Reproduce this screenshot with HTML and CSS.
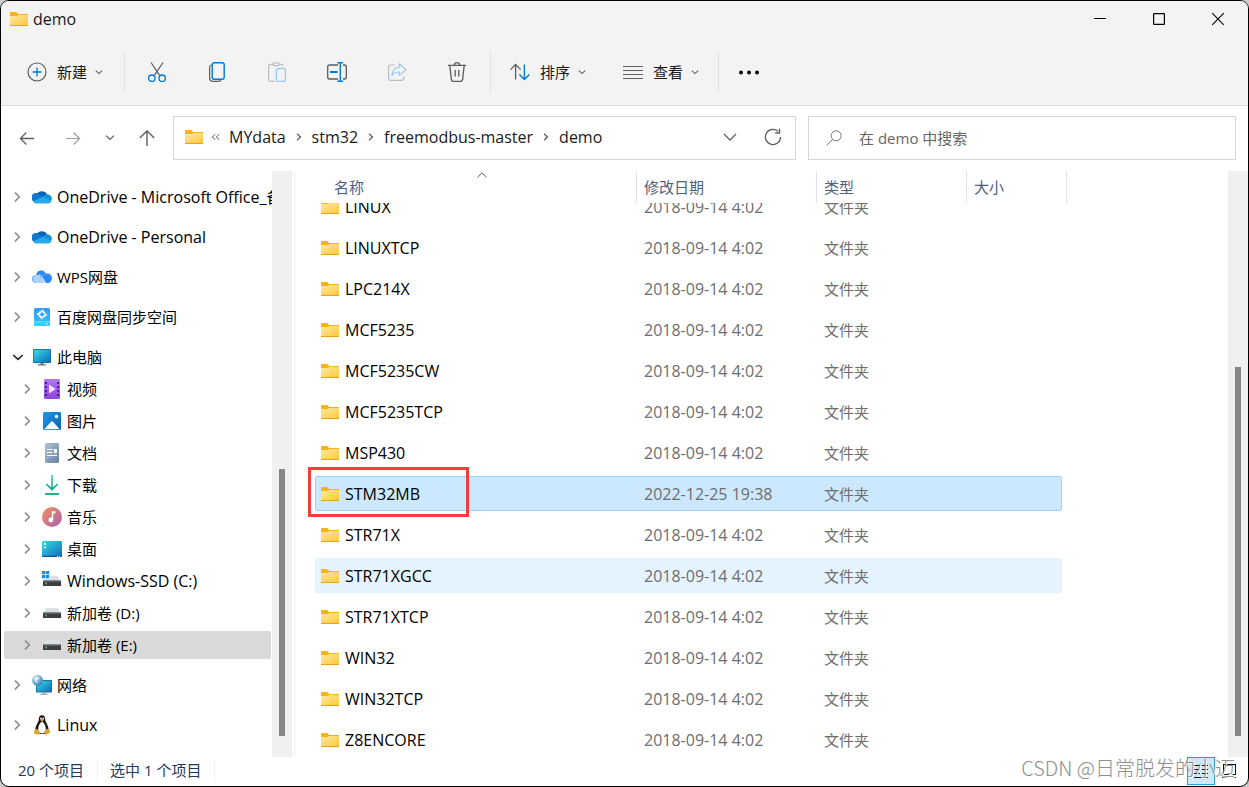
FILE: index.html
```
<!DOCTYPE html>
<html lang="zh-CN">
<head>
<meta charset="utf-8">
<title>demo</title>
<link rel="stylesheet" href="styles.css">
</head>
<body>
<svg class="defs" aria-hidden="true">
  <defs>
    <linearGradient id="gFolder" x1="0" y1="0" x2="1" y2="1"><stop offset="0" stop-color="#ffe9a2"/><stop offset="1" stop-color="#ffc83a"/></linearGradient>
    <linearGradient id="gScreen" x1="0" y1="0" x2="1" y2="1"><stop offset="0" stop-color="#36dbe0"/><stop offset="1" stop-color="#0f6cbd"/></linearGradient>
    <linearGradient id="gVideo" x1="0" y1="0" x2="0" y2="1"><stop offset="0" stop-color="#b377f2"/><stop offset="1" stop-color="#8c44dd"/></linearGradient>
    <linearGradient id="gPic" x1="0" y1="0" x2="1" y2="1"><stop offset="0" stop-color="#1f9be8"/><stop offset="1" stop-color="#0a5fb0"/></linearGradient>
    <linearGradient id="gDoc" x1="0" y1="0" x2="1" y2="1"><stop offset="0" stop-color="#b0c3d6"/><stop offset="1" stop-color="#6683a2"/></linearGradient>
    <linearGradient id="gDown" x1="0" y1="0" x2="0" y2="1"><stop offset="0" stop-color="#3bd39a"/><stop offset="1" stop-color="#0f9f93"/></linearGradient>
    <linearGradient id="gMusic" x1="0" y1="0" x2="1" y2="1"><stop offset="0" stop-color="#f4915a"/><stop offset="1" stop-color="#a75fb4"/></linearGradient>
    <linearGradient id="gWps" x1="0" y1="0" x2="1" y2="1"><stop offset="0" stop-color="#1d6ff2"/><stop offset="1" stop-color="#63b4fb"/></linearGradient>
    <linearGradient id="gBaidu" x1="0" y1="0" x2="0" y2="1"><stop offset="0" stop-color="#2c9cf8"/><stop offset="1" stop-color="#39c3fb"/></linearGradient>
    <radialGradient id="gGlobe" cx="0.35" cy="0.3" r="0.8"><stop offset="0" stop-color="#c4e6f5"/><stop offset="1" stop-color="#2a78ad"/></radialGradient>
  </defs>
  <symbol id="folder" viewBox="0 0 18 14">
    <path d="M0 1Q0 0 1 0H6.4L8.2 2H18V6H0Z" fill="#f6b21b"/>
    <path d="M0 4H6.6L8.4 3H18V13.4H0Z" fill="url(#gFolder)"/>
    <path d="M0 13H18V14H0Z" fill="#e6a21a"/>
  </symbol>
  <symbol id="right" viewBox="0 0 10 12"><path d="M3 1.6L7.4 6L3 10.4" fill="none" stroke="currentColor" stroke-width="1.5"/></symbol>
  <symbol id="step" viewBox="0 0 10 12"><path d="M3 2.6L6.4 6L3 9.4" fill="none" stroke="currentColor" stroke-width="1.3"/></symbol>
  <symbol id="down" viewBox="0 0 12 12"><path d="M1.2 4L6 8.4L10.8 4" fill="none" stroke="currentColor" stroke-width="1.6"/></symbol>
  <symbol id="chev" viewBox="0 0 10 10"><path d="M1.8 3.6L5 6.6L8.2 3.6" fill="none" stroke="currentColor" stroke-width="1.1"/></symbol>
  <symbol id="onedrive" viewBox="0 0 20 14">
    <path d="M4.4 4.8A6 5.6 0 0 1 15.2 4.2L12 9L3 10Z" fill="#0b63b8"/>
    <path d="M0.6 10.8A4.4 4.4 0 0 1 7 4.4L14 8.4L5 13H4A4.2 4.2 0 0 1 .6 10.8Z" fill="#1178cf"/>
    <path d="M10.6 7.4A5.2 5.2 0 0 1 15.4 4.2A4.6 4.6 0 0 1 19.8 9.6L18 12Z" fill="#1590df"/>
    <path d="M1 11.2L10.8 6.8L19.6 11A3.6 3.6 0 0 1 16.4 13.6H4.2A4 4 0 0 1 1 11.2Z" fill="#28a8ea"/>
  </symbol>
  <symbol id="wps" viewBox="0 0 20 14">
    <path d="M4.2 5A5 5 0 0 1 13.8 3.6A4.6 4.6 0 0 1 17 12.4L10 13H4.2A4 4 0 0 1 4.2 5Z" fill="url(#gWps)"/>
    <path d="M11.5 8A4 4 0 1 1 15.5 13H14Z" fill="#2f86f5"/>
    <path d="M1 9.4A4 4 0 0 1 8.4 6.8L14 13H4.6A3.8 3.8 0 0 1 1 9.4Z" fill="#a7d3fc"/>
    <path d="M6.8 4.8Q9 5.2 10.4 7.8L13.2 13" fill="none" stroke="#fff" stroke-width=".8"/>
  </symbol>
  <symbol id="baidu" viewBox="0 0 20 20">
    <rect x="2" y="1" width="16" height="18" rx="1.6" fill="url(#gBaidu)"/>
    <path d="M2 15H18V17.4A1.6 1.6 0 0 1 16.4 19H3.6A1.6 1.6 0 0 1 2 17.4Z" fill="#2bd3fb"/>
    <path d="M2 14.8H18" stroke="#dff4ff" stroke-width=".5"/><path d="M14 17H15.6" stroke="#fff"/>
    <path d="M10 3.6L14 7.4L10 11.2L6 7.4Z" fill="none" stroke="#fff" stroke-width="2" stroke-dasharray="4.2 1.3"/>
  </symbol>
  <symbol id="pc" viewBox="0 0 20 20">
    <rect x="1" y="2" width="18" height="14" rx=".8" fill="#176a9b"/><rect x="1.8" y="2.8" width="16.4" height="12.4" fill="url(#gScreen)"/>
    <path d="M8.5 16H11.5V17.2H14V18.4H6V17.2H8.5Z" fill="#6b7883"/>
  </symbol>
  <symbol id="video" viewBox="0 0 20 20">
    <rect x="2" width="16" height="20" rx="1.4" fill="url(#gVideo)"/>
    <path d="M4 3V18M16 3V18" stroke="#47208a" stroke-width="2" stroke-dasharray="2 2"/>
    <path d="M7 5.4V14.6L13.6 10Z" fill="#f1e8fc"/>
  </symbol>
  <symbol id="pic" viewBox="0 0 20 20">
    <rect x="1" y="1" width="18" height="18" rx="1.2" fill="url(#gPic)"/><circle cx="14.5" cy="5.5" r="1.7" fill="#fff"/>
    <path d="M2.2 18.2L9 10.8Q10 9.8 11 10.8L17.8 18.2Z" fill="#f4faff"/>
  </symbol>
  <symbol id="doc" viewBox="0 0 20 20">
    <rect x="3" width="14" height="20" rx="1.4" fill="url(#gDoc)"/>
    <path d="M5 6.5H10.6M5 9.5H10.6M5 12.5H15" stroke="#fff" stroke-width="1.2"/><rect x="12" y="6" width="3" height="3" fill="#fff"/><path d="M12 9.8H15" stroke="#fff"/>
  </symbol>
  <symbol id="dl" viewBox="0 0 20 20">
    <path d="M9.2 0H10.8V12.6L15.2 8.4L16.4 9.6L10 15.8L3.6 9.6L4.8 8.4L9.2 12.6Z" fill="url(#gDown)"/><path d="M3 18H17V20H3Z" fill="#25b58c"/>
  </symbol>
  <symbol id="music" viewBox="0 0 20 20">
    <circle cx="10" cy="10" r="10" fill="url(#gMusic)"/><circle cx="8.8" cy="13" r="2.4" fill="#fff"/><path d="M9.8 13V4.2H13.4V6.6H11.2V13Z" fill="#fff"/>
  </symbol>
  <symbol id="desk" viewBox="0 0 20 20">
    <rect y="2" width="20" height="16" rx="1.2" fill="url(#gScreen)"/><path d="M2.2 4H4V5.8H2.2ZM2.2 7.4H4V9.2H2.2Z" fill="#fff"/>
    <path d="M0 16.8H20A1.2 1.2 0 0 1 18.8 18H1.2A1.2 1.2 0 0 1 0 16.8Z" fill="#0c5595"/><path d="M15 17.4H16M17 17.4H18" stroke="#fff"/>
  </symbol>
  <symbol id="disk" viewBox="0 0 20 20">
    <path d="M4.4 5H15.6L18.4 9.8H1.6Z" fill="#dcdfe3"/><rect x="1" y="9.6" width="18" height="5.4" fill="#3c3e41"/><path d="M1 9.6H19V10.8H1Z" fill="#62666b"/><rect x="3.2" y="11.6" width="1.6" height="1.6" fill="#35e247"/>
  </symbol>
  <symbol id="ssd" viewBox="0 0 20 20">
    <use href="#disk"/><path d="M-.2-.2H8V7.6H-.2Z" fill="#fff"/><path d="M0 0H3.3V3.3H0ZM3.9 0H7.2V3.3H3.9ZM0 3.9H3.3V7.2H0ZM3.9 3.9H7.2V7.2H3.9Z" fill="#168ddd"/>
  </symbol>
  <symbol id="net" viewBox="0 0 20 20">
    <rect x="4" y="5" width="16" height="12.6" rx=".6" fill="#176a9b"/><rect x="4.8" y="5.8" width="14.4" height="11" fill="url(#gScreen)"/>
    <path d="M10.5 17.6H13.5V18.8H16V19.8H8V18.8H10.5Z" fill="#9aa3ab"/>
    <circle cx="5.6" cy="5.4" r="5.4" fill="url(#gGlobe)"/><path d="M2 2.2L6.4 1.4L7.4 3.6L4.6 5.2L5.6 8.6L3.2 7Z" fill="#eaf6fa" opacity=".75"/>
  </symbol>
  <symbol id="tux" viewBox="0 0 20 20">
    <path d="M10 .2C12.4.2 13.2 2 13.2 4.2C13.2 7.6 16.8 10 16.6 15.2L14 19H6L3.4 15.2C3.2 10 6.8 7.6 6.8 4.2C6.8 2 7.6.2 10 .2Z" fill="#171717"/>
    <path d="M10 6.6C12 7.8 14.2 11.2 13.8 15.2Q12.8 18.4 10 18.4T6.2 15.2C5.8 11.2 8 7.8 10 6.6Z" fill="#fafafa"/>
    <path d="M8 4.6L10 3.8L12.2 4.6L10 6.8Z" fill="#eda91c"/><circle cx="8.9" cy="3.3" r=".9" fill="#eee"/><circle cx="11.2" cy="3.3" r=".9" fill="#eee"/>
    <path d="M2.6 14.8L5 13.8L8.2 18.2Q7.8 20 5.8 19.6L1.8 18.6ZM17.4 14.8L15 13.8L12.4 16.4Q11.8 19.8 14 19.8L18.4 17.4Z" fill="#dfa522"/>
  </symbol>
</svg>

<div class="window">
  <header class="titlebar">
    <svg class="folder-icon"><use href="#folder"/></svg>
    <h1 class="title">demo</h1>
    <div class="caption">
      <button class="cap-btn" aria-label="最小化"><svg viewBox="0 0 14 14"><path d="M1 6.5H13" stroke="#000" fill="none"/></svg></button>
      <button class="cap-btn" aria-label="最大化"><svg viewBox="0 0 14 14"><rect x="1.6" y="1.6" width="10.8" height="10.8" rx=".6" stroke="#000" stroke-width="1.2" fill="none"/></svg></button>
      <button class="cap-btn" aria-label="关闭"><svg viewBox="0 0 14 14"><path d="M1.2 1.2L12.8 12.8M12.8 1.2L1.2 12.8" stroke="#000" stroke-width="1.1" fill="none"/></svg></button>
    </div>
  </header>

  <div class="toolbar">
    <button class="tool-new">
      <svg class="ic20" viewBox="0 0 20 20" fill="none"><circle cx="10" cy="10" r="9" stroke="#5c5c5c" stroke-width="1.2"/><path d="M10 5.6V14.4M5.6 10H14.4" stroke="#0078d4" stroke-width="1.3"/></svg>
      <span>新建</span><svg class="ic10"><use href="#chev"/></svg>
    </button>
    <span class="sep"></span>
    <div class="tool-group">
      <button class="tool" aria-label="剪切"><svg class="ic20" viewBox="0 0 20 20" fill="none"><path d="M4 .5L12.6 13.4M16 .5L7.4 13.4" stroke="#5c5c5c" stroke-width="1.2"/><circle cx="4.8" cy="16.2" r="3.2" stroke="#0078d4" stroke-width="1.3"/><circle cx="15.2" cy="16.2" r="3.2" stroke="#0078d4" stroke-width="1.3"/></svg></button>
      <button class="tool" aria-label="复制"><svg class="ic20" viewBox="0 0 20 20" fill="none"><path d="M4.6 2.8Q2.6 3.4 2.6 5.6V15.4Q2.6 19.4 6.6 19.4H11.4Q13.4 19.4 14 18" stroke="#5c5c5c" stroke-width="1.2"/><rect x="5.2" y=".8" width="12" height="16.4" rx="2" stroke="#0078d4" stroke-width="1.4"/></svg></button>
      <button class="tool" aria-label="粘贴"><svg class="ic20" viewBox="0 0 20 20" fill="none"><path d="M6.5 2.4H3.4Q1.6 2.4 1.6 4.2V17.6Q1.6 19.4 3.4 19.4H7.5M12 2.4H14.4Q16 2.4 16 4.4" stroke="#bdbdbd" stroke-width="1.2"/><rect x="5.8" y=".8" width="6.4" height="2.8" rx="1.4" stroke="#bdbdbd" stroke-width="1.2"/><rect x="9.4" y="6.6" width="9" height="12.8" rx="1.4" stroke="#99c9ed" stroke-width="1.3"/></svg></button>
      <button class="tool" aria-label="重命名"><svg class="ic20" viewBox="0 0 20 20" fill="none"><path d="M11 3H2.6Q.7 3 .7 5V15Q.7 17 2.6 17H11M16 3H17.4Q19.3 3 19.3 5V15Q19.3 17 17.4 17H16" stroke="#5c5c5c" stroke-width="1.3"/><path d="M3 10H10.6" stroke="#0078d4" stroke-width="2"/><path d="M13.3 .7V19.3M10.4 .7H16M10.4 19.3H16" stroke="#0078d4" stroke-width="1.4"/></svg></button>
      <button class="tool" aria-label="共享"><svg class="ic20" viewBox="0 0 20 20" fill="none"><path d="M8 3H4Q1.6 3 1.6 5.4V16Q1.6 18.4 4 18.4H14.4Q16.8 18.4 16.8 16V14.6" stroke="#bdbdbd" stroke-width="1.2"/><path d="M12.2 1.8L19 7.6L12.2 13.4V10Q7.6 9.8 5 13.6Q5.4 6 12.2 5.2Z" stroke="#99c9ed" stroke-width="1.2" stroke-linejoin="round"/></svg></button>
      <button class="tool" aria-label="删除"><svg class="ic20" viewBox="0 0 20 20" fill="none"><path d="M1 3.3H19M7.4 3Q7.4.7 10 .7T12.6 3M2.8 3.4L4.4 17.6Q4.6 19.3 6.2 19.3H13.8Q15.4 19.3 15.6 17.6L17.2 3.4M8.2 8V14.4M11.8 8V14.4" stroke="#5c5c5c" stroke-width="1.3"/></svg></button>
    </div>
    <span class="sep sep-mid"></span>
    <button class="tool-drop">
      <svg class="ic20" viewBox="0 0 20 20" fill="none"><path d="M5.6 17.6V2.6M.6 7.6L5.6 2.4L10.6 7.6" stroke="#5c5c5c" stroke-width="1.3"/><path d="M14.4 2.4V17.4M9.4 12.4L14.4 17.6L19.4 12.4" stroke="#0078d4" stroke-width="1.4"/></svg>
      <span>排序</span><svg class="ic10"><use href="#chev"/></svg>
    </button>
    <button class="tool-drop">
      <svg class="ic20" viewBox="0 0 20 20" fill="none"><path d="M0 4.5H20M0 8.5H20M0 12.5H20M0 16.5H20" stroke="#606060"/></svg>
      <span>查看</span><svg class="ic10"><use href="#chev"/></svg>
    </button>
    <span class="sep"></span>
    <button class="tool" aria-label="更多"><svg class="ic22" viewBox="0 0 22 22"><circle cx="3" cy="11.5" r="1.9"/><circle cx="11" cy="11.5" r="1.9"/><circle cx="19" cy="11.5" r="1.9"/></svg></button>
  </div>

  <div class="navrow">
    <nav class="navbtns" aria-label="导航">
      <button class="nav" aria-label="后退"><svg class="ic16" viewBox="0 0 16 16"><path d="M1.4 8.5H15M7.4 2.5L1.4 8.5L7.4 14.5" stroke="#606060" stroke-width="1.3" fill="none"/></svg></button>
      <button class="nav" aria-label="前进" disabled><svg class="ic16" viewBox="0 0 16 16"><path d="M14.6 8.5H1M8.6 2.5L14.6 8.5L8.6 14.5" stroke="#9b9b9b" stroke-width="1.2" fill="none"/></svg></button>
      <button class="nav nav-small" aria-label="最近位置"><svg class="ic10" viewBox="0 0 10 10"><path d="M1 2.6L5 6.4L9 2.6" stroke="#606060" stroke-width="1.3" fill="none"/></svg></button>
      <button class="nav" aria-label="向上"><svg class="ic16" viewBox="0 0 16 16"><path d="M8 16V1M.8 8L8 .9L15.2 8" stroke="#606060" stroke-width="1.4" fill="none"/></svg></button>
    </nav>
    <div class="address">
      <svg class="folder-icon"><use href="#folder"/></svg>
      <svg class="ic10 dbl" viewBox="0 0 10 10"><path d="M4.2 2.2L1.4 5L4.2 7.8M8.2 2.2L5.4 5L8.2 7.8" stroke="#555" fill="none"/></svg>
      <a class="crumb" href="#">MYdata</a><svg class="crumb-sep"><use href="#step"/></svg>
      <a class="crumb" href="#">stm32</a><svg class="crumb-sep"><use href="#step"/></svg>
      <a class="crumb" href="#">freemodbus-master</a><svg class="crumb-sep"><use href="#step"/></svg>
      <a class="crumb" href="#">demo</a>
      <button class="addr-btn addr-first" aria-label="历史"><svg class="ic16" viewBox="0 0 16 16"><path d="M2 5L8 11L14 5" stroke="#606060" stroke-width="1.3" fill="none"/></svg></button>
      <button class="addr-btn" aria-label="刷新"><svg class="ic18" viewBox="0 0 18 18"><path d="M14.2 3.4A7.6 7.6 0 1 0 16.6 9M15.6 .8V5H11.2" stroke="#606060" stroke-width="1.3" fill="none"/></svg></button>
    </div>
    <label class="search">
      <svg class="ic16" viewBox="0 0 16 16"><circle cx="10.2" cy="5.8" r="5" stroke="#777" fill="none"/><path d="M6.6 9.4L.6 15.4" stroke="#777" fill="none"/></svg>
      <input class="search-input" type="search" placeholder="在 demo 中搜索" aria-label="在 demo 中搜索">
    </label>
  </div>

  <div class="content">
    <aside class="side">
      <ul class="tree">
        <li><a class="item" href="#"><svg class="exp"><use href="#right"/></svg><svg class="cloud"><use href="#onedrive"/></svg><span class="latin">OneDrive - Microsoft Office_备份</span></a></li>
        <li><a class="item" href="#"><svg class="exp"><use href="#right"/></svg><svg class="cloud"><use href="#onedrive"/></svg><span class="latin">OneDrive - Personal</span></a></li>
        <li><a class="item" href="#"><svg class="exp"><use href="#right"/></svg><svg class="cloud"><use href="#wps"/></svg><span>WPS网盘</span></a></li>
        <li><a class="item" href="#"><svg class="exp"><use href="#right"/></svg><svg class="ic20"><use href="#baidu"/></svg><span>百度网盘同步空间</span></a></li>
        <li><a class="item" href="#"><svg class="exp exp-open"><use href="#down"/></svg><svg class="ic20"><use href="#pc"/></svg><span>此电脑</span></a>
          <ul class="subtree">
            <li><a class="item" href="#"><svg class="exp"><use href="#right"/></svg><svg class="ic20"><use href="#video"/></svg><span>视频</span></a></li>
            <li><a class="item" href="#"><svg class="exp"><use href="#right"/></svg><svg class="ic20"><use href="#pic"/></svg><span>图片</span></a></li>
            <li><a class="item" href="#"><svg class="exp"><use href="#right"/></svg><svg class="ic20"><use href="#doc"/></svg><span>文档</span></a></li>
            <li><a class="item" href="#"><svg class="exp"><use href="#right"/></svg><svg class="ic20"><use href="#dl"/></svg><span>下载</span></a></li>
            <li><a class="item" href="#"><svg class="exp"><use href="#right"/></svg><svg class="ic20"><use href="#music"/></svg><span>音乐</span></a></li>
            <li><a class="item" href="#"><svg class="exp"><use href="#right"/></svg><svg class="ic20"><use href="#desk"/></svg><span>桌面</span></a></li>
            <li><a class="item" href="#"><svg class="exp"><use href="#right"/></svg><svg class="ic20"><use href="#ssd"/></svg><span class="latin">Windows-SSD (C:)</span></a></li>
            <li><a class="item" href="#"><svg class="exp"><use href="#right"/></svg><svg class="ic20"><use href="#disk"/></svg><span>新加卷 (D:)</span></a></li>
            <li><a class="item current" href="#"><svg class="exp"><use href="#right"/></svg><svg class="ic20"><use href="#disk"/></svg><span>新加卷 (E:)</span></a></li>
          </ul>
        </li>
        <li><a class="item" href="#"><svg class="exp"><use href="#right"/></svg><svg class="ic20"><use href="#net"/></svg><span>网络</span></a></li>
        <li><a class="item" href="#"><svg class="exp"><use href="#right"/></svg><svg class="ic20"><use href="#tux"/></svg><span class="latin">Linux</span></a></li>
      </ul>
    </aside>
    <div class="scrollbar"><div class="thumb thumb-side"></div></div>

    <main class="main">
      <table class="files">
        <thead>
          <tr><th scope="col">名称<svg class="sort" viewBox="0 0 12 8"><path d="M1.4 6.4L6 1.8L10.6 6.4" stroke="#606060" fill="none"/></svg></th><th scope="col">修改日期</th><th scope="col">类型</th><th scope="col">大小</th></tr>
        </thead>
        <tbody>
          <tr><td class="name"><svg class="folder-icon"><use href="#folder"/></svg>LINUX</td><td class="date">2018-09-14 4:02</td><td>文件夹</td><td></td></tr>
          <tr><td class="name"><svg class="folder-icon"><use href="#folder"/></svg>LINUXTCP</td><td class="date">2018-09-14 4:02</td><td>文件夹</td><td></td></tr>
          <tr><td class="name"><svg class="folder-icon"><use href="#folder"/></svg>LPC214X</td><td class="date">2018-09-14 4:02</td><td>文件夹</td><td></td></tr>
          <tr><td class="name"><svg class="folder-icon"><use href="#folder"/></svg>MCF5235</td><td class="date">2018-09-14 4:02</td><td>文件夹</td><td></td></tr>
          <tr><td class="name"><svg class="folder-icon"><use href="#folder"/></svg>MCF5235CW</td><td class="date">2018-09-14 4:02</td><td>文件夹</td><td></td></tr>
          <tr><td class="name"><svg class="folder-icon"><use href="#folder"/></svg>MCF5235TCP</td><td class="date">2018-09-14 4:02</td><td>文件夹</td><td></td></tr>
          <tr><td class="name"><svg class="folder-icon"><use href="#folder"/></svg>MSP430</td><td class="date">2018-09-14 4:02</td><td>文件夹</td><td></td></tr>
          <tr class="selected"><td class="name"><svg class="folder-icon"><use href="#folder"/></svg>STM32MB<span class="mark"></span></td><td class="date">2022-12-25 19:38</td><td>文件夹</td><td></td></tr>
          <tr><td class="name"><svg class="folder-icon"><use href="#folder"/></svg>STR71X</td><td class="date">2018-09-14 4:02</td><td>文件夹</td><td></td></tr>
          <tr class="hovered"><td class="name"><svg class="folder-icon"><use href="#folder"/></svg>STR71XGCC</td><td class="date">2018-09-14 4:02</td><td>文件夹</td><td></td></tr>
          <tr><td class="name"><svg class="folder-icon"><use href="#folder"/></svg>STR71XTCP</td><td class="date">2018-09-14 4:02</td><td>文件夹</td><td></td></tr>
          <tr><td class="name"><svg class="folder-icon"><use href="#folder"/></svg>WIN32</td><td class="date">2018-09-14 4:02</td><td>文件夹</td><td></td></tr>
          <tr><td class="name"><svg class="folder-icon"><use href="#folder"/></svg>WIN32TCP</td><td class="date">2018-09-14 4:02</td><td>文件夹</td><td></td></tr>
          <tr><td class="name"><svg class="folder-icon"><use href="#folder"/></svg>Z8ENCORE</td><td class="date">2018-09-14 4:02</td><td>文件夹</td><td></td></tr>
        </tbody>
      </table>
    </main>
    <div class="scrollbar"><div class="thumb thumb-main"></div></div>
  </div>

  <footer class="status">
    <span class="stat">20 个项目</span>
    <span class="stat">选中 1 个项目</span>
    <div class="views">
      <button class="view view-on" aria-label="详细信息"><svg viewBox="0 0 16 16"><path d="M1 2.5H7M9 2.5H15M1 6.5H7M9 6.5H15M1 10.5H7M9 10.5H15M1 14.5H15" stroke="#111" fill="none"/></svg></button>
      <button class="view" aria-label="大图标"><svg viewBox="0 0 16 16"><rect x="2.5" y="1.5" width="12" height="10" stroke="#111" fill="none"/><path d="M1 14.5H15" stroke="#111"/></svg></button>
    </div>
    <span class="watermark">CSDN @日常脱发的小迈</span>
  </footer>
</div>
</body>
</html>
```
FILE: styles.css
```
* { box-sizing: border-box; }

body {
  margin: 0;
  background: #c9cbcc;
  font: 15px/20px "Open Sans", "Noto Sans CJK SC", sans-serif;
  color: #1a1a1a;
}

button {
  display: flex;
  align-items: center;
  justify-content: center;
  margin: 0;
  padding: 0;
  border: 0;
  background: none;
  font: inherit;
  color: inherit;
}

a { color: inherit; text-decoration: none; }
ul { margin: 0; padding: 0; list-style: none; }
svg { display: block; flex: none; }

.defs { position: absolute; width: 0; height: 0; }
.folder-icon { width: 18px; height: 14px; }
.ic10 { width: 10px; height: 10px; color: #606060; }
.ic16 { width: 16px; height: 16px; }
.ic18 { width: 18px; height: 18px; }
.ic20 { width: 20px; height: 20px; }
.ic22 { width: 22px; height: 22px; }

.window {
  display: flex;
  flex-direction: column;
  height: 100vh;
  border: 1px solid #000;
  border-radius: 9px;
  background: #fff;
  overflow: hidden;
}

/* title bar */
.titlebar {
  display: flex;
  align-items: center;
  height: 37px;
  padding: 0 1px 2px 9px;
  gap: 5px;
  background: #f3f3f3;
}
.title { margin: 0; font-size: 16px; font-weight: 400; }
.caption { display: flex; margin-left: auto; }
.cap-btn { width: 59px; height: 35px; }
.cap-btn svg { width: 14px; height: 14px; }

/* command bar */
.toolbar {
  display: flex;
  align-items: center;
  height: 68px;
  border-bottom: 1px solid #dcdcdc;
  background: #f3f3f3;
}
.tool-new, .tool-drop { height: 40px; padding: 0 18px; }
.tool-new { padding: 0 20px 0 26px; }
.tool-new span, .tool-drop span { margin: 0 7px 0 10px; }
.sep { width: 1px; height: 40px; background: #e0e0e0; }
.sep-mid { margin-right: 1px; }
.tool-group { display: flex; padding: 0 3px 0 2px; }
.tool { width: 60px; height: 40px; }

/* address row */
.navrow {
  display: flex;
  align-items: center;
  height: 65px;
  padding: 10px 12px 11px 3px;
  gap: 12px;
}
.navbtns { display: flex; margin-right: -9px; }
.nav { width: 46px; height: 40px; }
.nav-small { width: 28px; }
.address, .search {
  display: flex;
  align-items: center;
  height: 44px;
  border: 1px solid #d6d6d6;
}
.address { flex: 606 1 0; padding: 0 4px 2px 11px; }
.dbl { margin: 0 8px; }
.crumb { font-size: 16px; white-space: nowrap; }
.crumb-sep { width: 10px; height: 12px; margin: 0 8px; color: #555; }
.addr-btn { width: 36px; height: 40px; }
.addr-first { width: 50px; margin-left: auto; }
.search { flex: 409 1 0; padding-left: 17px; gap: 17px; }
.search-input {
  flex: 1;
  min-width: 0;
  padding: 0;
  border: 0;
  outline: 0;
  background: none;
  font: inherit;
}
.search-input::placeholder { color: #666; opacity: 1; }

/* body */
.content { display: flex; flex: 1; min-height: 0; }
.side { flex: none; width: 271px; padding-top: 12px; overflow: hidden; color: #000; }
.tree { display: flex; flex-direction: column; gap: 12px; padding: 0 1px 0 3px; }
.subtree { display: flex; flex-direction: column; gap: 4px; margin-top: 4px; }
.item {
  display: flex;
  align-items: center;
  height: 28px;
  padding-left: 8px;
  border-radius: 2px;
  white-space: nowrap;
}
.subtree .item { padding-left: 18px; }
.item span { margin-left: 5px; }
.item .latin { font-size: 16px; }
.exp { width: 10px; height: 12px; margin-right: 10px; color: #8a8a8a; }
.exp-open { width: 12px; margin-right: 8px; color: #222; }
.cloud { width: 20px; height: 14px; }
.current { background: #d9d9d9; }

.scrollbar { flex: none; width: 20px; padding: 0 7px; background: #f0f0f0; }
.thumb { width: 6px; background: #868686; }
.thumb-side { height: 267px; margin-top: 298px; }
.thumb-main { height: 369px; margin-top: 196px; }

.main { display: flex; flex: 1; min-width: 0; margin-left: 2px; border-left: 1px solid #f3f3f3; }
.files { display: flex; flex: 1; flex-direction: column; min-width: 0; }
.files tr { display: grid; grid-template-columns: 322px 180px 150px 95px; }
.files thead { display: block; height: 32px; padding-left: 20px; }
.files thead tr { grid-template-columns: 322px 180px 150px 100px; height: 32px; }
.files th {
  position: relative;
  padding: 6px 0 0 7px;
  border-right: 1px solid #e2e2e2;
  text-align: left;
  font-weight: 400;
  color: #4c607f;
}
.files th:first-child { padding-left: 19px; }
.sort { position: absolute; top: 0; left: 161px; width: 12px; height: 8px; }
.files tbody {
  display: flex;
  flex: 1;
  flex-direction: column;
  justify-content: flex-end;
  gap: 6px;
  min-height: 0;
  padding-left: 20px;
  overflow: hidden;
}
.files tbody tr {
  flex: none;
  width: 747px;
  height: 35px;
  border: 1px solid transparent;
  border-radius: 2px;
}
.files td { display: flex; align-items: center; padding: 0 0 0 6px; color: #6d6d6d; }
.files .name { position: relative; gap: 6px; padding: 0 0 0 5px; font-size: 16px; color: #000; }
.files .date { font-size: 16px; }
.files tbody .selected { background: #cce8ff; border-color: #99d1ff; }
.files tbody .hovered { background: #e5f3ff; }
.mark {
  position: absolute;
  left: -8px;
  top: -10px;
  width: 161px;
  height: 50px;
  border: 3px solid #fc3a3a;
}

/* status bar */
.status {
  position: relative;
  display: flex;
  height: 29px;
  padding: 0 3px 0 5px;
  color: #1e395b;
}
.stat { height: 22px; margin-top: 3px; padding: 0 13px 0 12px; border-right: 1px solid #f0f0f0; }
.views { display: flex; margin-left: auto; padding-right: 2px; }
.view { width: 28px; height: 28px; border: 1px solid transparent; }
.view svg { width: 16px; height: 16px; }
.view-on { border-color: #26a0da; background: #cde8f7; }
.watermark {
  position: absolute;
  right: 13px;
  top: -3px;
  font: 300 20px/28px "Noto Sans CJK SC", sans-serif;
  color: #8e8e8e;
  text-shadow: 1px 1px 0 #fff;
  white-space: nowrap;
  pointer-events: none;
}
```
